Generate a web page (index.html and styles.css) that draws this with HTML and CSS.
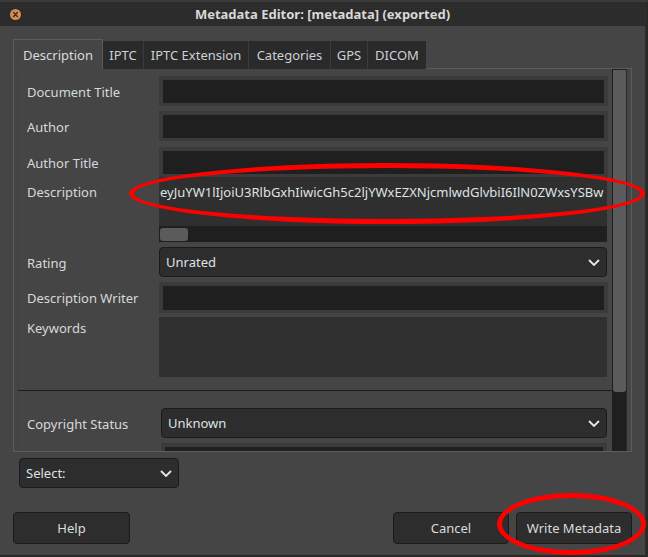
FILE: index.html
```html
<!DOCTYPE html>
<html>
<head>
<meta charset="utf-8">
<link rel="stylesheet" href="styles.css">
</head>
<body>
<div class="screen">
  <div class="menu-strip"></div>
  <div class="window">
    <div class="titlebar">
      <div class="tb-left">
        <svg class="close" width="11" height="11" viewBox="0 0 11 11"><circle cx="5.5" cy="5.5" r="5.5" fill="#d98c4e"/><path d="M3.6 3.6 L7.4 7.4 M7.4 3.6 L3.6 7.4" stroke="#3b2a1c" stroke-width="1.4" stroke-linecap="round"/></svg>
      </div>
      <div class="title">Metadata Editor: [metadata] (exported)</div>
      <div class="tb-right"></div>
    </div>
    <div class="dialog">
      <div class="tabs">
        <div class="tab active w-desc">Description</div>
        <div class="tab w-iptc">IPTC</div>
        <div class="tab w-ext">IPTC Extension</div>
        <div class="tab w-cat">Categories</div>
        <div class="tab w-gps">GPS</div>
        <div class="tab w-dicom">DICOM</div>
      </div>
      <div class="notebook">
        <div class="form">
          <div class="row r1">
            <div class="label">Document Title</div>
            <div class="entry"><div class="entry-in"></div></div>
          </div>
          <div class="row r2">
            <div class="label">Author</div>
            <div class="entry"><div class="entry-in"></div></div>
          </div>
          <div class="row r3">
            <div class="label">Author Title</div>
            <div class="entry"><div class="entry-in"></div></div>
          </div>
          <div class="row r4">
            <div class="label top">Description</div>
            <div class="desc-col">
              <div class="textview">eyJuYW1lIjoiU3RlbGxhIiwicGh5c2ljYWxEZXNjcmlwdGlvbiI6IlN0ZWxsYSBw</div>
              <div class="hscroll"><div class="hthumb"></div></div>
            </div>
          </div>
          <div class="row r5">
            <div class="label">Rating</div>
            <div class="combo"><span>Unrated</span><svg width="12" height="7" viewBox="0 0 12 7"><path d="M1 1 L6 6 L11 1" fill="none" stroke="#e8e8e8" stroke-width="1.8"/></svg></div>
          </div>
          <div class="row r6">
            <div class="label">Description Writer</div>
            <div class="entry"><div class="entry-in"></div></div>
          </div>
          <div class="row r7">
            <div class="label top2">Keywords</div>
            <div class="keywords"></div>
          </div>
          <div class="separator"></div>
          <div class="row r8">
            <div class="label wide">Copyright Status</div>
            <div class="combo c2"><span>Unknown</span><svg width="12" height="7" viewBox="0 0 12 7"><path d="M1 1 L6 6 L11 1" fill="none" stroke="#e8e8e8" stroke-width="1.8"/></svg></div>
          </div>
          <div class="row r9">
            <div class="label wide"></div>
            <div class="entry e2"><div class="entry-in"></div></div>
          </div>
        </div>
        <div class="vscroll"><div class="vthumb"></div></div>
      </div>
      <div class="select-row">
        <div class="combo select"><span>Select:</span><svg width="12" height="7" viewBox="0 0 12 7"><path d="M1 1 L6 6 L11 1" fill="none" stroke="#e8e8e8" stroke-width="1.8"/></svg></div>
      </div>
      <div class="buttons">
        <div class="btn help">Help</div>
        <div class="spacer"></div>
        <div class="btn">Cancel</div>
        <div class="btn">Write Metadata</div>
      </div>
    </div>
  </div>
  <div class="ring ring-desc"></div>
  <div class="ring ring-write"></div>
</div>
</body>
</html>
```
FILE: styles.css
```css
* { box-sizing: border-box; }
html, body { margin: 0; padding: 0; }
body {
  width: 648px;
  height: 557px;
  overflow: hidden;
  background: #2a2926;
  font-family: "Noto Sans", "DejaVu Sans", sans-serif;
  font-size: 13px;
  color: #d5d9dc;
}
.screen { position: relative; width: 648px; height: 557px; }
.menu-strip { height: 2px; background: #3a3a3a; }
.window {
  width: 646px;
  height: 553px;
  background: #454545;
  border-right: 1px solid #2e2e2e;
  display: flex;
  flex-direction: column;
}
.titlebar {
  height: 24px;
  background: #2c2c2c;
  display: grid;
  grid-template-columns: 1fr auto 1fr;
  align-items: center;
}
.tb-left { display: flex; align-items: center; padding-left: 10px; }
.close { display: block; }
.title { font-weight: bold; color: #d8d8d8; font-size: 13px; }
.dialog {
  flex: 1;
  padding: 13px 13px 0 13px;
  display: flex;
  flex-direction: column;
}
.tabs {
  display: flex;
  align-items: flex-end;
  height: 30px;
  margin-bottom: -1px;
  position: relative;
  z-index: 1;
}
.tab {
  height: 28px;
  background: #2a2a2a;
  border-right: 1px solid #3c3c3c;
  display: flex;
  align-items: center;
  justify-content: center;
  color: #cdd1d4;
  padding-bottom: 1px;
}
.tab.active {
  height: 30px;
  background: #454545;
  border: 1px solid #5c5c5c;
  border-bottom: none;
  color: #d8dbde;
  padding-bottom: 0;
}
.w-desc { width: 90px; }
.w-iptc { width: 41px; }
.w-ext { width: 105px; }
.w-cat { width: 82px; }
.w-gps { width: 37px; }
.w-dicom { width: 58px; border-right: none; }
.notebook {
  height: 384px;
  border: 1px solid #5c5c5c;
  display: flex;
  padding: 0 4px 0 3px;
}
.form {
  width: 596px;
  height: 382px;
  overflow: hidden;
  padding-top: 7px;
  border-left: 1px solid #404040;
}
.row { display: flex; }
.label {
  width: 141px;
  padding-left: 9px;
  padding-top: 1px;
  display: flex;
  align-items: center;
  white-space: nowrap;
  line-height: 18px;
}
.label.top { align-items: flex-start; padding-top: 6px; }
.label.top2 { align-items: flex-start; padding-top: 2px; }
.label.wide { width: 143px; }
.entry {
  width: 449px;
  background: #3b3b3b;
  padding: 4px 4px 3px 4px;
}
.entry-in { height: 100%; background: #1f1f1f; }
.r1 { height: 30px; }
.r2 { height: 30px; margin-top: 5px; }
.r3 { height: 30px; margin-top: 6px; }
.r4 { height: 65px; }
.r5 { height: 30px; margin-top: 5px; }
.r6 { height: 31px; margin-top: 5px; }
.r7 { height: 60px; margin-top: 4px; }
.r8 { height: 30px; margin-top: 17px; }
.r9 { height: 30px; margin-top: 5px; }
.e2 { width: 446px; }
.desc-col { width: 448px; display: flex; flex-direction: column; }
.textview {
  height: 49px;
  background: #2f2f2f;
  padding: 6px 0 0 1px;
  line-height: 18px;
  white-space: nowrap;
  overflow: hidden;
  color: #dfe2e4;
}
.hscroll {
  height: 16px;
  background: #1f1f1f;
  padding: 2px 0 1px 1px;
}
.hthumb { width: 28px; height: 100%; background: #5b5b5b; border-radius: 3px; }
.combo {
  width: 448px;
  height: 30px;
  background: #2d2d2d;
  border: 1px solid #1b1b1b;
  border-radius: 4px;
  display: flex;
  align-items: center;
  justify-content: space-between;
  padding: 0 6px 0 6px;
  color: #dfe2e4;
}
.combo svg { display: block; }
.c2 { width: 446px; }
.keywords { width: 448px; background: #303030; }
.separator { height: 1px; background: #1d1d1d; margin-top: 13px; }
.vscroll {
  width: 15px;
  background: #1f1f1f;
  border-left: 1px solid #1e1e1e;
  border-right: 1px solid #2a2a2a;
  padding-top: 1px;
}
.vthumb {
  height: 322px;
  background: #5b5b5b;
  border-radius: 0 0 3px 3px;
}
.select-row { margin-top: 6px; padding-left: 6px; }
.select { width: 160px; padding-right: 6px; }
.buttons { display: flex; margin-top: 24px; gap: 7px; }
.spacer { flex: 1; }
.btn {
  width: 116px;
  height: 32px;
  background: #2d2d2d;
  border: 1px solid #1b1b1b;
  border-radius: 4px;
  display: flex;
  align-items: center;
  justify-content: center;
  color: #d8dbde;
}
.btn.help { width: 117px; }
.ring {
  position: absolute;
  border: 5px solid #ff0000;
  border-radius: 50%;
}
.ring-desc { left: 129px; top: 163px; width: 516px; height: 61px; }
.ring-write { left: 497px; top: 493px; width: 149px; height: 62px; }
```
